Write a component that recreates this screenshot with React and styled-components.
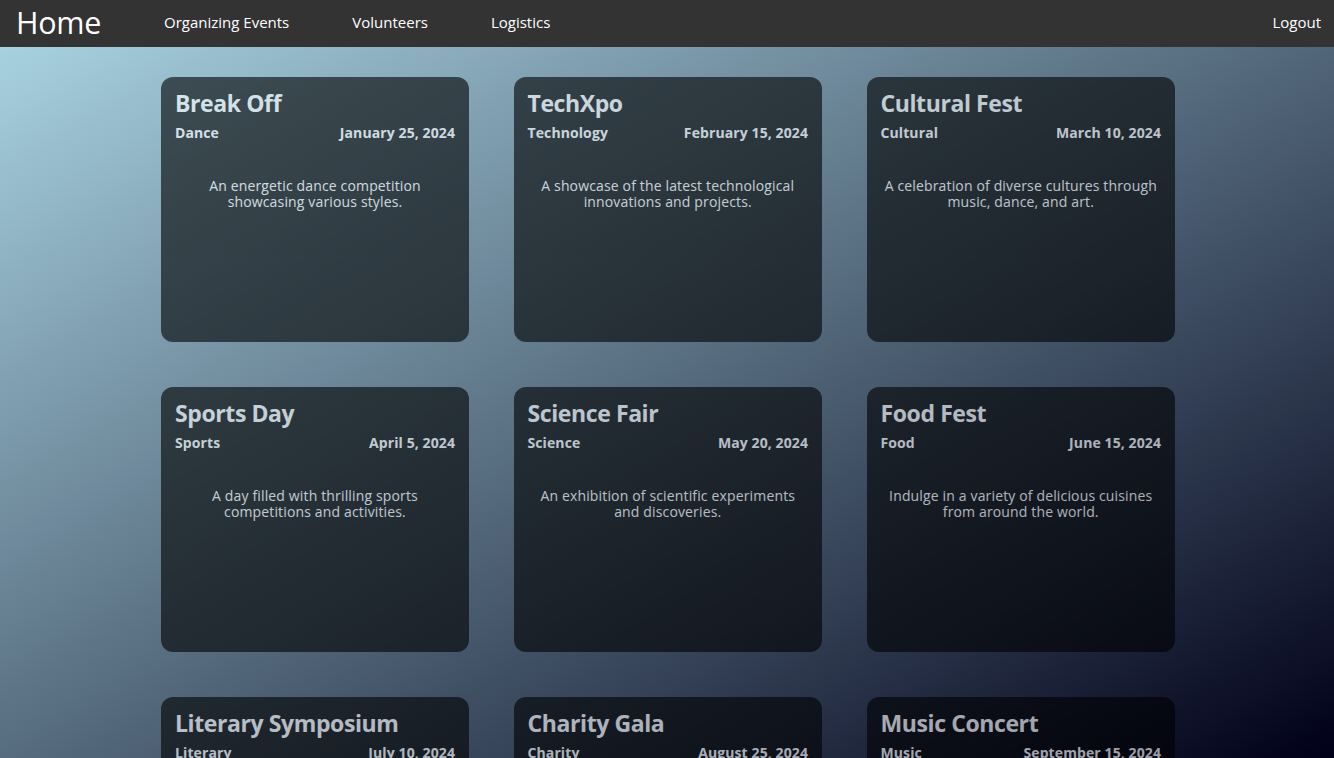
import React from "react";
import styled, { createGlobalStyle } from "styled-components";

const Global = createGlobalStyle`
  html, body { margin: 0; padding: 0; }
  body {
    font-family: "Open Sans", "Noto Sans", sans-serif;
    min-height: 100vh;
    background: linear-gradient(to bottom right, #add8e6 0%, #000018 100%);
    background-attachment: fixed;
  }
`;

const Nav = styled.nav`
  height: 47px;
  box-sizing: border-box;
  background: #333333;
  display: flex;
  align-items: center;
  padding: 0 13px 3px 16px;
  color: #fff;
`;

const Brand = styled.a`
  font-size: 30.5px;
  font-weight: 400;
  color: #fff;
  text-decoration: none;
  margin-right: 63px;
  letter-spacing: -0.3px;
`;

const Links = styled.div`
  display: flex;
  gap: 63px;
  flex: 1;
`;

const NavLink = styled.a`
  font-size: 15px;
  color: #fff;
  text-decoration: none;
`;

const Grid = styled.main`
  width: 1014px;
  margin: 30px 0 0 calc(50% - 506px);
  display: grid;
  grid-template-columns: 308px 308.5px 308.5px;
  column-gap: 44.5px;
  row-gap: 45px;
  padding-bottom: 40px;
`;

const Card = styled.article`
  height: 265px;
  box-sizing: border-box;
  border-radius: 12px;
  background: #000;
  opacity: 0.6;
  color: #fff;
  padding: 10px 14px;
  display: flex;
  flex-direction: column;
`;

const Title = styled.h2`
  margin: 0;
  font-size: 23px;
  font-weight: 700;
  line-height: 32px;
  letter-spacing: -0.4px;
`;

const Meta = styled.div`
  display: flex;
  justify-content: space-between;
  font-size: 14px;
  font-weight: 700;
  margin-top: 4px;
  line-height: 20px;
  letter-spacing: 0.1px;
`;

const Desc = styled.p`
  margin: 35px 0 0;
  text-align: center;
  font-size: 14px;
  line-height: 16px;
  letter-spacing: 0.15px;
`;

const events = [
  ["Break Off", "Dance", "January 25, 2024", "An energetic dance competition showcasing various styles."],
  ["TechXpo", "Technology", "February 15, 2024", "A showcase of the latest technological innovations and projects."],
  ["Cultural Fest", "Cultural", "March 10, 2024", "A celebration of diverse cultures through music, dance, and art."],
  ["Sports Day", "Sports", "April 5, 2024", "A day filled with thrilling sports competitions and activities."],
  ["Science Fair", "Science", "May 20, 2024", "An exhibition of scientific experiments and discoveries."],
  ["Food Fest", "Food", "June 15, 2024", "Indulge in a variety of delicious cuisines from around the world."],
  ["Literary Symposium", "Literary", "July 10, 2024", "A gathering of writers and readers celebrating literature."],
  ["Charity Gala", "Charity", "August 25, 2024", "An elegant evening raising funds for a good cause."],
  ["Music Concert", "Music", "September 15, 2024", "A night of live performances by talented musicians."],
];

export default function App() {
  return (
    <>
      <Global />
      <Nav>
        <Brand href="#">Home</Brand>
        <Links>
          <NavLink href="#">Organizing Events</NavLink>
          <NavLink href="#">Volunteers</NavLink>
          <NavLink href="#">Logistics</NavLink>
        </Links>
        <NavLink href="#">Logout</NavLink>
      </Nav>
      <Grid>
        {events.map(([t, c, d, desc]) => (
          <Card key={t}>
            <Title>{t}</Title>
            <Meta>
              <span>{c}</span>
              <span>{d}</span>
            </Meta>
            <Desc>{desc}</Desc>
          </Card>
        ))}
      </Grid>
    </>
  );
}
